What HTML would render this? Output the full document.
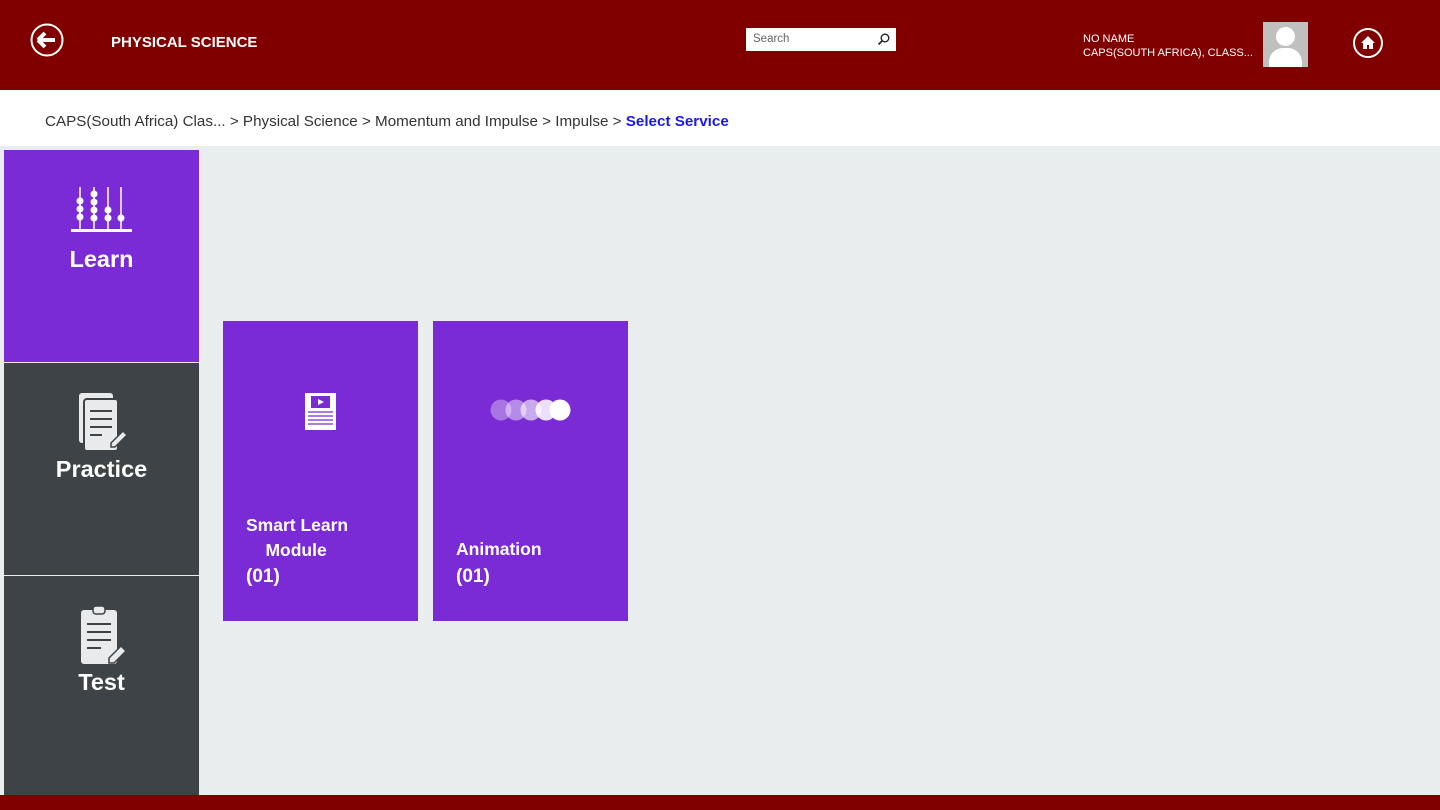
<!DOCTYPE html>
<html><head><meta charset="utf-8"><style>
*{margin:0;padding:0;box-sizing:border-box}
body{width:1440px;height:810px;overflow:hidden;background:#eaedee;font-family:"Liberation Sans",sans-serif;position:relative}
.hdr{position:absolute;left:0;top:0;width:1440px;height:90px;background:#800000}
.bc{position:absolute;left:0;top:90px;width:1440px;height:56px;background:#fff;font-size:15.2px;color:#333;padding:23px 0 0 45px;white-space:nowrap}
.bc b{color:#1a1ae6}
.side{position:absolute;left:4px;width:195px;color:#fff;text-align:center;font-weight:bold}
.tile{position:absolute;top:321px;width:195px;height:300px;background:#7b2bd6;color:#fff;font-size:17.5px;font-weight:bold}
.foot{position:absolute;left:0;top:795px;width:1440px;height:15px;background:#800000}
</style></head><body>
<div class="hdr">
<svg style="position:absolute;left:30px;top:23px" width="34" height="34" viewBox="0 0 34 34"><circle cx="17" cy="17" r="15.5" fill="none" stroke="#fff" stroke-width="2"/><path d="M8 17h17M8 17l7-7M8 17l7 7" stroke="#fff" stroke-width="4" fill="none"/></svg>
<div style="position:absolute;left:111px;top:34px;color:#fff;font-weight:bold;font-size:15px">PHYSICAL SCIENCE</div>
<div style="position:absolute;left:746px;top:28px;width:150px;height:23px;background:#fff;font-size:11.5px;color:#666;padding:5px 7px">Search
<svg style="position:absolute;right:6px;top:5px" width="13" height="13" viewBox="0 0 13 13"><circle cx="8" cy="5" r="3.8" fill="none" stroke="#222" stroke-width="1.4"/><path d="M5 8L1.5 11.5" stroke="#222" stroke-width="1.6"/></svg></div>
<div style="position:absolute;left:1083px;top:32px;color:#fff;font-size:11px;line-height:14px">NO NAME<br>CAPS(SOUTH AFRICA), CLASS...</div>
<div style="position:absolute;left:1263px;top:22px;width:45px;height:45px;background:#c0c0c0;overflow:hidden"><div style="position:absolute;left:13px;top:5px;width:19px;height:19px;border-radius:50%;background:#fff"></div><div style="position:absolute;left:6px;top:26px;width:33px;height:30px;border-radius:14px 14px 0 0;background:#fff"></div></div>
<svg style="position:absolute;left:1353px;top:28px" width="30" height="30" viewBox="0 0 30 30"><circle cx="15" cy="15" r="14" fill="none" stroke="#fff" stroke-width="2"/><path d="M8 15l7-7 7 7h-2v6h-4v-4h-2v4h-4v-6z" fill="#fff"/></svg>
</div>
<div class="bc">CAPS(South Africa) Clas... &gt; Physical Science &gt; Momentum and Impulse &gt; Impulse &gt; <b>Select Service</b></div>
<div class="side" style="top:150px;height:212px;background:#7b2bd6">
<svg style="margin-top:35px" width="62" height="50" viewBox="0 0 62 50"><g stroke="#fff" stroke-width="1.5"><path d="M9 2v44M23 2v44M37 2v44M50 2v44"/></g><rect x="0" y="44" width="61" height="3" fill="#fff"/><g fill="#fff"><circle cx="9" cy="16" r="3.5"/><circle cx="9" cy="24" r="3.5"/><circle cx="9" cy="32" r="3.5"/><circle cx="23" cy="9" r="3.5"/><circle cx="23" cy="17" r="3.5"/><circle cx="23" cy="25" r="3.5"/><circle cx="23" cy="33" r="3.5"/><circle cx="37" cy="25" r="3.5"/><circle cx="37" cy="33" r="3.5"/><circle cx="50" cy="33" r="3.5"/></g></svg>
<div style="font-size:23.5px;margin-top:6px">Learn</div></div>
<div class="side" style="top:363px;height:212px;background:#3d4347">
<svg style="margin-top:28px" width="62" height="62" viewBox="0 0 62 62"><rect x="8" y="2" width="34" height="50" rx="3" fill="#e8eaeb"/><rect x="13" y="8" width="34" height="52" rx="3" fill="#e8eaeb" stroke="#3d4347" stroke-width="2"/><g stroke="#3d4347" stroke-width="2"><path d="M19 20h22M19 28h22M19 36h22M19 44h12"/></g><path d="M40 52l12-12 4 4-12 12h-4z" fill="#e8eaeb" stroke="#3d4347" stroke-width="1.5"/></svg>
<div style="font-size:23.5px;margin-top:-2px">Practice</div></div>
<div class="side" style="top:576px;height:220px;background:#3d4347">
<svg style="margin-top:28px" width="62" height="62" viewBox="0 0 62 62"><rect x="10" y="6" width="36" height="54" rx="3" fill="#e8eaeb"/><rect x="22" y="2" width="12" height="8" rx="3" fill="#e8eaeb" stroke="#3d4347" stroke-width="1.5"/><g stroke="#3d4347" stroke-width="2"><path d="M16 20h24M16 28h24M16 36h24M16 44h14"/></g><path d="M38 54l12-12 5 5-12 12h-5z" fill="#e8eaeb" stroke="#3d4347" stroke-width="1.5"/></svg>
<div style="font-size:23.5px;margin-top:-2px">Test</div></div>
<div class="tile" style="left:223px">
<svg style="position:absolute;left:82px;top:72px" width="31" height="37" viewBox="0 0 31 37"><rect width="31" height="37" fill="#fff"/><rect x="6" y="3" width="19" height="12" fill="#7b2bd6"/><path d="M13 6l6 3-6 3z" fill="#fff"/><g stroke="#7b2bd6" stroke-width="1.3"><path d="M3 19h25M3 23h25M3 27h25M3 31h25"/></g></svg>
<div style="position:absolute;left:23px;top:192px;line-height:25px">Smart Learn<br>&nbsp;&nbsp;&nbsp;&nbsp;Module</div>
<div style="position:absolute;left:23px;top:245px;font-size:19px">(01)</div></div>
<div class="tile" style="left:433px">
<svg style="position:absolute;left:56px;top:77px" width="84" height="24" viewBox="0 0 84 24"><g fill="#fff"><circle cx="12" cy="12" r="10.5" opacity=".35"/><circle cx="27" cy="12" r="10.5" opacity=".45"/><circle cx="42" cy="12" r="10.5" opacity=".6"/><circle cx="57" cy="12" r="10.5" opacity=".85"/><circle cx="71" cy="12" r="10.5"/></g></svg>
<div style="position:absolute;left:23px;top:218px">Animation</div>
<div style="position:absolute;left:23px;top:245px;font-size:19px">(01)</div></div>
<div class="foot"></div>
</body></html>
